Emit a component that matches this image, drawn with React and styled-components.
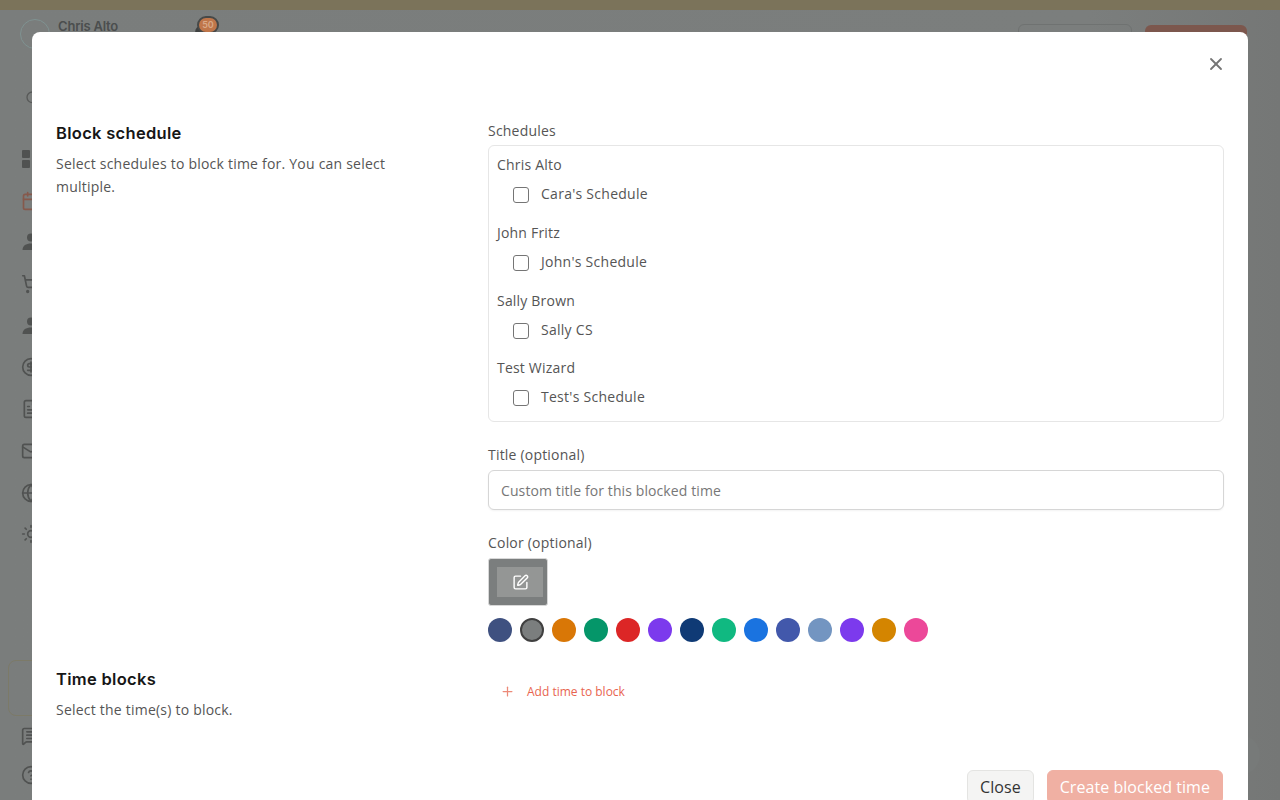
import React from 'react';
import styled, { createGlobalStyle } from 'styled-components';
import {
  Bell, Calendar, CircleHelp, FileText, Globe, Mail, MessageSquareText, Plus, Search,
  ShoppingCart, SquarePen, Sun, X, CircleDollarSign,
} from 'lucide-react';

const Global = createGlobalStyle`
  html, body { margin: 0; padding: 0; height: 100%; overflow: hidden; }
  body { font-family: "Open Sans", "Liberation Sans", sans-serif; font-size: 14px; letter-spacing: 0.2px; color: #555; }
  * { box-sizing: border-box; }
`;

const Page = styled.div`
  position: relative;
  width: 1280px;
  height: 800px;
  overflow: hidden;
  background: linear-gradient(90deg, #7a7d7c 0%, #7b7e7d 85%, #757776 100%);
`;

const Banner = styled.div`
  height: 10px;
  background: #7b735a;
`;

const TopBar = styled.div`
  display: flex;
  align-items: flex-start;
  height: 60px;
  padding: 9px 33px 0 20px;
`;

const Avatar = styled.div`
  width: 30px;
  height: 30px;
  border-radius: 50%;
  border: 1px solid #7f9291;
  flex: none;
`;

const UserName = styled.div`
  width: 133px;
  margin-left: 8px;
  font: 600 13px/14px "Inter", "Liberation Sans", sans-serif;
  letter-spacing: -0.2px;
  color: #4b4e4e;
`;

const BellWrap = styled.div`
  position: relative;
  margin-top: 6px;
  color: #3f4141;
`;

const BellBadge = styled.span`
  position: absolute;
  top: -9px;
  left: 6px;
  width: 22px;
  height: 18px;
  border-radius: 9px;
  background: #c0764a;
  border: 2px solid #474948;
  font: 600 9px/14px "Inter", sans-serif;
  letter-spacing: 0;
  text-align: center;
  color: #d9a988;
`;

const TopActions = styled.div`
  display: flex;
  gap: 13px;
  margin-left: auto;
  padding-top: 5px;
`;

const GhostAction = styled.div`
  width: 114px;
  height: 40px;
  border: 1px solid #6f7271;
  border-radius: 6px;
`;

const RedAction = styled.div`
  width: 102px;
  height: 40px;
  margin-top: 1px;
  border-radius: 6px;
  background: #7c574d;
`;

const Sidebar = styled.div`
  display: flex;
  flex-direction: column;
  align-items: flex-start;
  padding: 20px 0 0 21px;
  height: 730px;
`;

const SideSearch = styled.div`
  color: #575958;
  margin: 0 0 43px 4px;
  height: 16px;
`;

const SideItem = styled.div`
  height: 41.7px;
  color: ${(p) => p.$color || '#505251'};
`;

const Promo = styled.div`
  width: 60px;
  height: 56px;
  margin: 94px 0 0 -13px;
  border: 1px solid #7c7a68;
  border-radius: 8px;
`;

const SideFoot = styled.div`
  margin-top: ${(p) => p.$top}px;
  color: #505251;
  height: 20px;
`;

const ChatBubble = styled.div`
  position: absolute;
  top: 735px;
  left: 1220px;
  width: 40px;
  height: 40px;
  border-radius: 50%;
  background: #777a79;
`;

const Modal = styled.div`
  position: absolute;
  top: 32px;
  left: 32px;
  width: 1216px;
  height: 800px;
  padding: 89px 24px 0;
  background: #fff;
  border-radius: 8px;
`;

const CloseIcon = styled.button`
  position: absolute;
  top: 22px;
  right: 22px;
  display: flex;
  width: 20px;
  height: 20px;
  padding: 0;
  border: 0;
  background: none;
  color: #757575;
`;

const Section = styled.section`
  display: grid;
  grid-template-columns: 432px 736px;
  margin-top: ${(p) => p.$top || 0}px;
`;

const Heading = styled.h2`
  margin: 0;
  font: 600 16.5px/24px "Inter", "Liberation Sans", sans-serif;
  letter-spacing: 0.3px;
  color: #161616;
`;

const Hint = styled.p`
  margin: 7px 0 0;
  width: 345px;
  font-size: 14px;
  line-height: 23px;
  letter-spacing: 0.22px;
  color: #555;
`;

const Label = styled.div`
  font-size: 14px;
  line-height: 20px;
  height: ${(p) => p.$height || 24}px;
  color: #555;
`;

const ScheduleBox = styled.div`
  height: 277px;
  padding: 9px 8px 8px;
  margin-bottom: 23px;
  border: 1px solid #e6e6e6;
  border-radius: 6px;
`;

const Group = styled.div`
  height: 67.8px;
`;

const Owner = styled.div`
  line-height: 20px;
  color: #555;
`;

const CheckRow = styled.label`
  display: flex;
  align-items: center;
  gap: 12px;
  height: 38px;
  padding-left: 16px;
  letter-spacing: 0.27px;
  color: #555;
  line-height: 20px;
`;

const Box = styled.span`
  width: 16px;
  height: 16px;
  margin-top: 2px;
  border: 1px solid #757575;
  border-radius: 3px;
  background: #fff;
`;

const TextField = styled.input`
  display: block;
  width: 100%;
  height: 40px;
  margin-bottom: 23px;
  padding: 0 12px;
  border: 1px solid #d6d6d6;
  border-radius: 6px;
  font: 14px "Open Sans", sans-serif;
  letter-spacing: 0.1px;
  box-shadow: 0 1px 2px rgba(0, 0, 0, 0.05);
  &::placeholder { color: #777; opacity: 1; }
`;

const Preview = styled.div`
  display: flex;
  width: 60px;
  height: 48px;
  margin: 1px 0 12px;
  padding: 8px 4px 8px 8px;
  border: 1px solid #d8d8d8;
  border-radius: 3px;
  background: #7b7e7e;
`;

const PreviewInner = styled.div`
  display: flex;
  align-items: center;
  justify-content: center;
  width: 46px;
  height: 30px;
  background: #949695;
  color: #fff;
`;

const Swatches = styled.div`
  display: flex;
  gap: 8px;
`;

const Swatch = styled.span`
  width: 24px;
  height: 24px;
  border-radius: 50%;
  background: ${(p) => p.$color};
  border: ${(p) => (p.$selected ? '2px solid #404040' : 'none')};
`;

const AddTime = styled.button`
  display: flex;
  align-items: center;
  gap: 12px;
  height: 32px;
  margin-top: 8px;
  padding: 0 0 0 12px;
  border: 0;
  background: none;
  font: 500 12px "Open Sans", sans-serif;
  letter-spacing: 0;
  color: #e8654f;
  & svg { color: #ec8a78; }
`;

const Footer = styled.div`
  display: flex;
  justify-content: flex-end;
  gap: 13px;
  margin-top: 49px;
  padding-right: 1px;
`;

const FooterButton = styled.button`
  height: 34px;
  padding: 0 12px;
  border-radius: 6px;
  font: 16px "Open Sans", sans-serif;
  letter-spacing: 0.05px;
  border: 1px solid ${(p) => (p.$primary ? '#f0b0a3' : '#e4e4e2')};
  background: ${(p) => (p.$primary ? '#f0b0a3' : '#f4f4f3')};
  color: ${(p) => (p.$primary ? '#fff' : '#333')};
`;

const groups = [
  ['Chris Alto', "Cara's Schedule"],
  ['John Fritz', "John's Schedule"],
  ['Sally Brown', 'Sally CS'],
  ['Test Wizard', "Test's Schedule"],
];

const colors = [
  '#3f5180', '#7b7e7e', '#d97706', '#059669', '#dc2626', '#7c3aed', '#0f3a75',
  '#10b981', '#1a73e0', '#4258ab', '#7395c1', '#7c3aed', '#d48500', '#ec4899',
];

const GridFilled = () => (
  <svg width="20" height="20" viewBox="0 0 20 20" fill="currentColor">
    <rect x="1" y="1" width="8" height="8" rx="1" />
    <rect x="11" y="1" width="8" height="8" rx="1" />
    <rect x="1" y="11" width="8" height="8" rx="1" />
    <rect x="11" y="11" width="8" height="8" rx="1" />
  </svg>
);

const PersonFilled = () => (
  <svg width="20" height="20" viewBox="0 0 20 20" fill="currentColor">
    <circle cx="10" cy="5.5" r="4" />
    <path d="M1.5 18c0-4.4 3.6-6.5 8.500-6.500s8.500 2.100 8.500 6.500z" />
  </svg>
);

const sideIcons = [
  [GridFilled], [Calendar, '#86594c'], [PersonFilled], [ShoppingCart], [PersonFilled],
  [CircleDollarSign], [FileText], [Mail], [Globe], [Sun],
];

export default function App() {
  return (
    <Page>
      <Global />
      <Banner />
      <TopBar>
        <Avatar />
        <UserName>Chris Alto</UserName>
        <BellWrap>
          <Bell size={20} fill="#3f4141" />
          <BellBadge>50</BellBadge>
        </BellWrap>
        <TopActions>
          <GhostAction />
          <RedAction />
        </TopActions>
      </TopBar>
      <Sidebar>
        <SideSearch><Search size={16} /></SideSearch>
        {sideIcons.map(([Icon, color], i) => (
          <SideItem key={i} $color={color}><Icon size={20} /></SideItem>
        ))}
        <Promo />
        <SideFoot $top={10}><MessageSquareText size={20} /></SideFoot>
        <SideFoot $top={19}><CircleHelp size={20} /></SideFoot>
      </Sidebar>
      <ChatBubble />

      <Modal>
        <CloseIcon><X size={20} strokeWidth={2.2} /></CloseIcon>
        <Section>
          <div>
            <Heading>Block schedule</Heading>
            <Hint>Select schedules to block time for. You can select multiple.</Hint>
          </div>
          <div>
            <Label>Schedules</Label>
            <ScheduleBox>
              {groups.map(([owner, schedule]) => (
                <Group key={owner}>
                  <Owner>{owner}</Owner>
                  <CheckRow><Box />{schedule}</CheckRow>
                </Group>
              ))}
            </ScheduleBox>
            <Label $height={25}>Title (optional)</Label>
            <TextField placeholder="Custom title for this blocked time" />
            <Label>Color (optional)</Label>
            <Preview>
              <PreviewInner><SquarePen size={17} /></PreviewInner>
            </Preview>
            <Swatches>
              {colors.map((c, i) => <Swatch key={i} $color={c} $selected={i === 1} />)}
            </Swatches>
          </div>
        </Section>
        <Section $top={25}>
          <div>
            <Heading>Time blocks</Heading>
            <Hint>Select the time(s) to block.</Hint>
          </div>
          <div>
            <AddTime><Plus size={15} strokeWidth={2} />Add time to block</AddTime>
          </div>
        </Section>
        <Footer>
          <FooterButton>Close</FooterButton>
          <FooterButton $primary>Create blocked time</FooterButton>
        </Footer>
      </Modal>
    </Page>
  );
}
